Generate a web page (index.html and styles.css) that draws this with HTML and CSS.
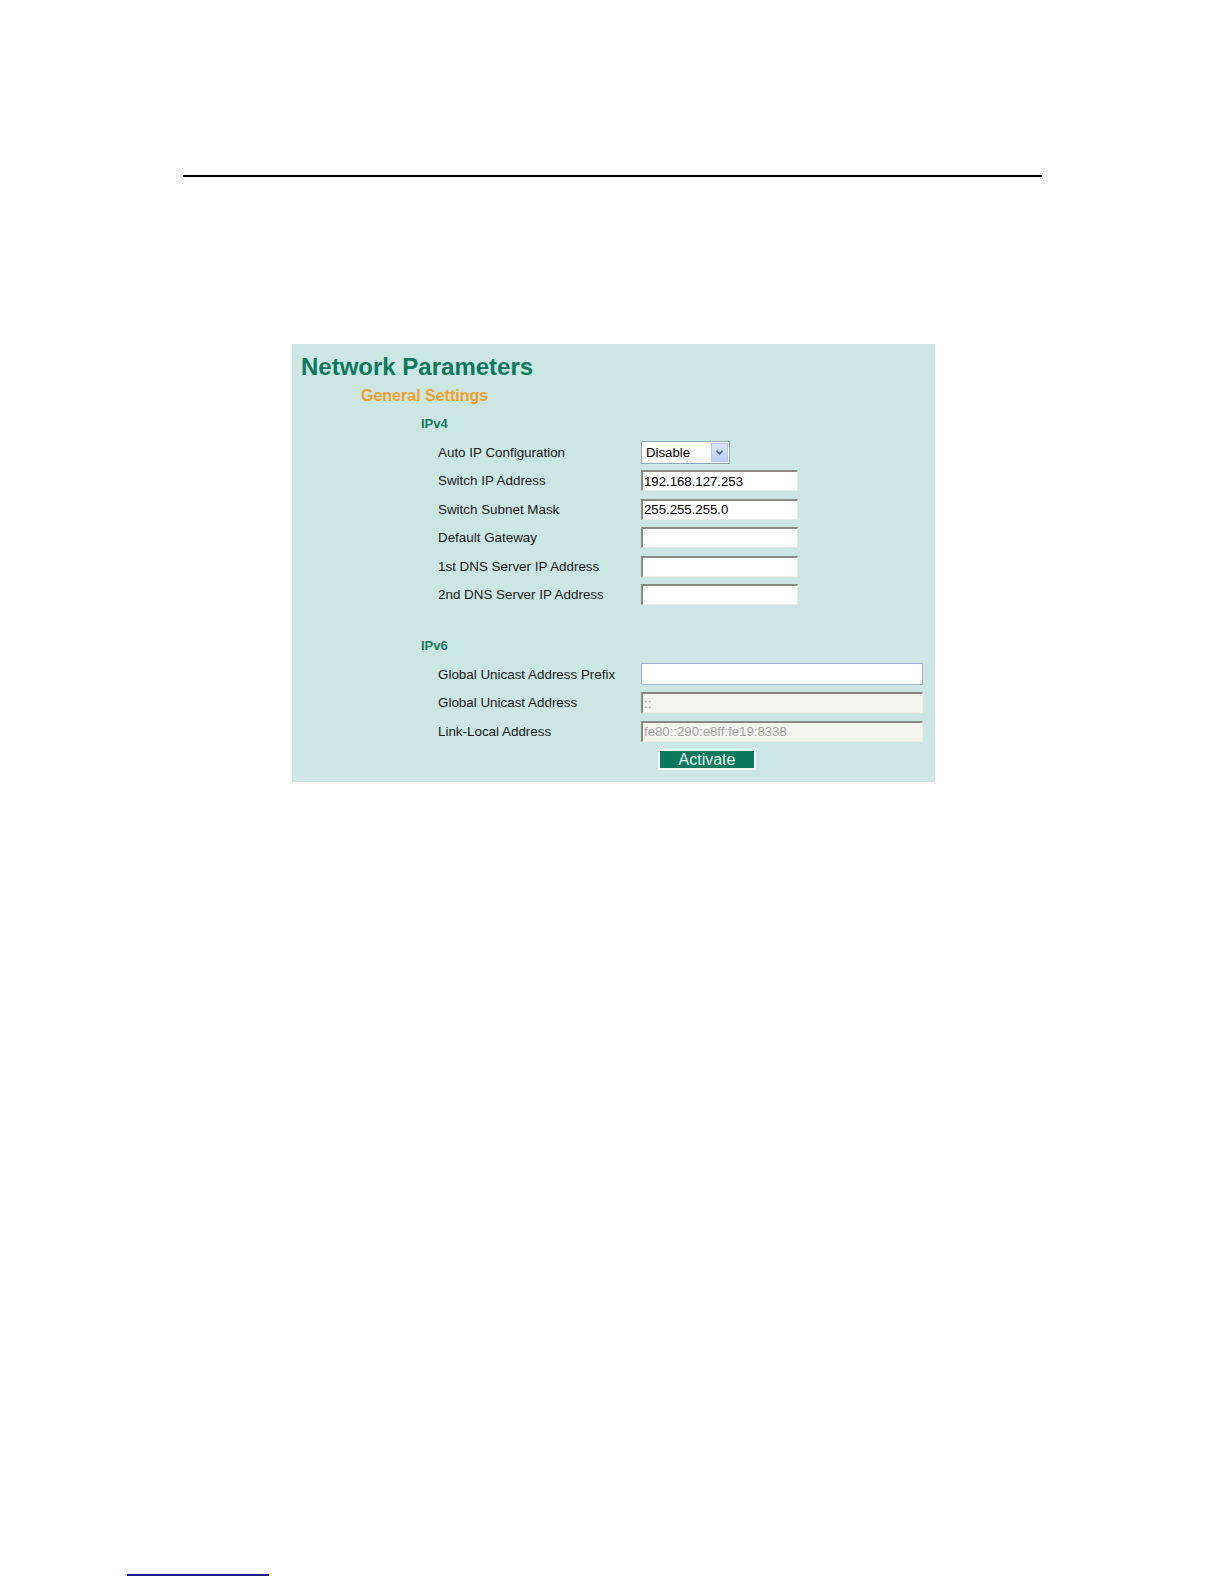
FILE: index.html
```html
<!DOCTYPE html>
<html>
<head>
<meta charset="utf-8">
<link rel="stylesheet" href="styles.css">
</head>
<body>
<div class="top-rule"></div>
<div class="panel">
  <h1 class="title">Network Parameters</h1>
  <h2 class="subtitle">General Settings</h2>
  <h3 class="group">IPv4</h3>
  <div class="rows">
    <div class="row">
      <span class="label">Auto IP Configuration</span>
      <div class="select">
        <span class="select-text">Disable</span>
        <span class="select-btn">
          <svg width="9" height="7" viewBox="0 0 9 7"><path d="M1.5 1.8 L4.5 4.8 L7.5 1.8" fill="none" stroke="#4d6185" stroke-width="1.7"/></svg>
        </span>
      </div>
    </div>
    <div class="row"><span class="label">Switch IP Address</span><input class="field" type="text" value="192.168.127.253"></div>
    <div class="row"><span class="label">Switch Subnet Mask</span><input class="field" type="text" value="255.255.255.0"></div>
    <div class="row"><span class="label">Default Gateway</span><input class="field" type="text" value=""></div>
    <div class="row"><span class="label">1st DNS Server IP Address</span><input class="field" type="text" value=""></div>
    <div class="row"><span class="label">2nd DNS Server IP Address</span><input class="field" type="text" value=""></div>
  </div>
  <h3 class="group group-v6">IPv6</h3>
  <div class="rows">
    <div class="row"><span class="label">Global Unicast Address Prefix</span><input class="field wide focus" type="text" value=""></div>
    <div class="row"><span class="label">Global Unicast Address</span><input class="field wide disabled" type="text" value="::" disabled></div>
    <div class="row"><span class="label">Link-Local Address</span><input class="field wide disabled" type="text" value="fe80::290:e8ff:fe19:8338" disabled></div>
  </div>
  <div class="actions"><button class="activate" type="button">Activate</button></div>
</div>
<div class="bottom-rule"></div>
</body>
</html>
```

FILE: styles.css
```css
html, body {
  margin: 0;
  padding: 0;
  background: #ffffff;
}
body {
  width: 1224px;
  min-height: 1584px;
  font-family: "Liberation Sans", Arial, sans-serif;
  padding-top: 175px;
  box-sizing: border-box;
}
.top-rule {
  margin-left: 183px;
  width: 859px;
  border-top: 2px solid #000000;
}
.panel {
  margin-top: 167px;
  margin-left: 292px;
  width: 643px;
  height: 438px;
  box-sizing: border-box;
  background: #cce6e4;
  padding-top: 9px;
  padding-left: 9px;
}
.title {
  margin: 0;
  font-size: 24px;
  line-height: 28px;
  font-weight: bold;
  color: #0a7a5c;
}
.subtitle {
  margin: 5px 0 0 60px;
  font-size: 16px;
  line-height: 20px;
  font-weight: bold;
  color: #f5a02c;
}
.group {
  margin: 10px 0 0 120px;
  font-size: 13px;
  line-height: 16px;
  font-weight: bold;
  color: #137c5e;
}
.group-v6 {
  margin-top: 29px;
}
.rows {
  margin-top: 6px;
  margin-left: 137px;
  display: flex;
  flex-direction: column;
}
.row {
  height: 28.5px;
  display: flex;
  align-items: center;
}
.label {
  width: 203px;
  flex: none;
  font-size: 13.4px;
  line-height: 15px;
  color: #1a1a1a;
  white-space: nowrap;
}
.select {
  width: 89px;
  height: 23px;
  box-sizing: border-box;
  border: 1px solid #8fa6c2;
  background: #ffffff;
  display: flex;
  align-items: center;
  justify-content: space-between;
}
.select-text {
  font-size: 13.2px;
  color: #000000;
  padding-left: 4px;
}
.select-btn {
  width: 17px;
  height: 19px;
  margin-right: 1px;
  background: linear-gradient(#d9e4fc, #bccff8);
  border: 1px solid #b4c7ef;
  box-sizing: border-box;
  display: flex;
  align-items: center;
  justify-content: center;
}
.field {
  -webkit-appearance: none;
  appearance: none;
  width: 157px;
  height: 21px;
  box-sizing: border-box;
  margin: 0;
  padding: 0 0 0 1px;
  background: #ffffff;
  border-top: 2px solid #8a8984;
  border-left: 2px solid #8a8984;
  border-right: 1px solid #ecebe6;
  border-bottom: 1px solid #ecebe6;
  border-radius: 0;
  font-family: "Liberation Sans", Arial, sans-serif;
  font-size: 13.2px;
  color: #000000;
  outline: none;
}
.wide {
  width: 282px;
}
.focus {
  height: 22px;
  border: 1px solid #9fb4cc;
}
.disabled {
  background: #f4f4f1;
  color: #a3a3a0;
}
.actions {
  margin-top: 3px;
  margin-left: 357px;
}
.activate {
  width: 98px;
  height: 21px;
  box-sizing: border-box;
  margin: 0;
  padding: 0;
  background: #0b7a5b;
  border: 2px solid #f2f8f6;
  border-radius: 0;
  font-family: "Liberation Sans", Arial, sans-serif;
  font-size: 16px;
  line-height: 17px;
  color: #eef7f3;
}
.bottom-rule {
  margin-top: 792px;
  margin-left: 127px;
  width: 142px;
  border-top: 2px solid #1c1c8a;
}
```
